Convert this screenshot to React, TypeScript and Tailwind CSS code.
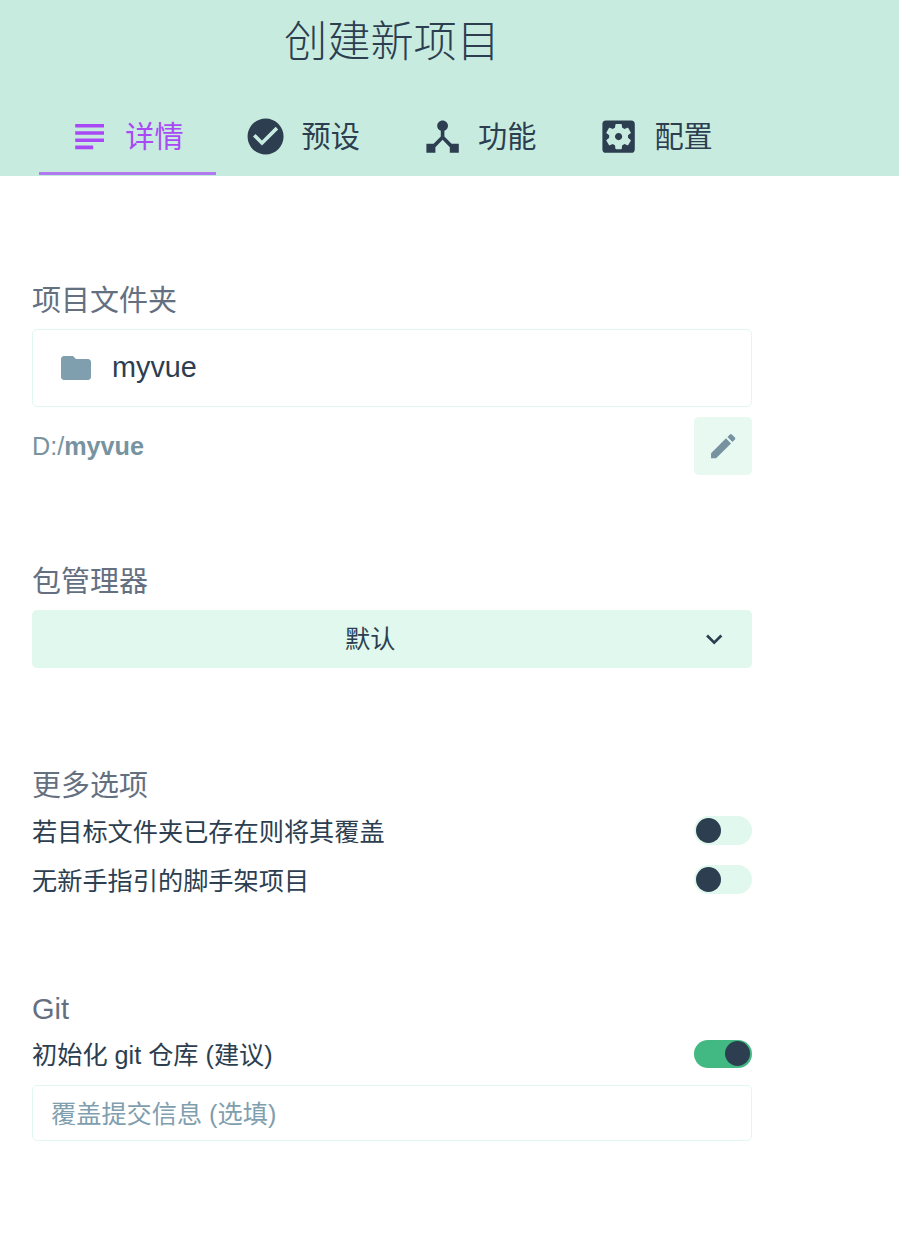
import React from "react";
import type { IconType } from "react-icons";
import {
  MdCheckCircle,
  MdDeviceHub,
  MdEdit,
  MdFolder,
  MdKeyboardArrowDown,
  MdSettingsApplications,
  MdSubject,
} from "react-icons/md";

const tabs: { label: string; icon: IconType }[] = [
  { label: "详情", icon: MdSubject },
  { label: "预设", icon: MdCheckCircle },
  { label: "功能", icon: MdDeviceHub },
  { label: "配置", icon: MdSettingsApplications },
];

const Heading = ({ children }: { children: React.ReactNode }) => (
  <h2 className="h-[42px] text-[29px] leading-[44px] text-[#646f7f]">
    {children}
  </h2>
);

const Switch = ({ label, on = false }: { label: string; on?: boolean }) => (
  <div className="flex h-[49px] items-center justify-between">
    <span>{label}</span>
    <button
      role="switch"
      aria-checked={on}
      aria-label={label}
      className={
        on
          ? "-mt-1 flex h-7 w-[58px] items-center justify-end rounded-full bg-[#42b983] pr-0.5"
          : "-mt-1 flex h-[29px] w-[58px] items-center rounded-full bg-[#e0f8ed] pl-0.5"
      }
    >
      <span className="size-[25px] rounded-full bg-[#2c3e50]" />
    </button>
  </div>
);

const App = () => {
  return (
    <main className="h-[1240px] bg-white font-['Liberation_Sans','Noto_Sans_CJK_SC',sans-serif] text-[25.2px] text-[#2c3e50]">
      <header className="h-44 bg-[#c8ebdf]">
        <div className="flex w-[784px] flex-col items-center">
          <h1 className="h-[84px] text-[43.2px] leading-[85px] font-light">
            创建新项目
          </h1>
          <nav className="flex h-[92px]">
            {tabs.map(({ label, icon: Icon }, i) => (
              <button
                key={label}
                className={
                  i === 0
                    ? "flex w-[176.4px] flex-col text-[#a849f5]"
                    : "flex w-[176.4px] flex-col"
                }
              >
                <span className="flex h-[88px] items-center pt-[18px] pl-[28.8px]">
                  <Icon className="size-[43.2px]" />
                  <span className="ml-[14px] text-[29.2px] leading-[42px]">
                    {label}
                  </span>
                </span>
                {i === 0 && <span className="h-[3px] w-full bg-[#b07bee]" />}
              </button>
            ))}
          </nav>
        </div>
      </header>

      <div className="w-[752px] pl-8">
        <section className="pt-[103px]">
          <Heading>项目文件夹</Heading>
          <div className="mt-2 flex h-[78px] items-center rounded-[5px] border border-[#e0f8ed] pl-[25px]">
            <MdFolder className="size-9 text-[#7f9eae]" />
            <span className="ml-[18px] text-[28.8px]">myvue</span>
          </div>
          <div className="mt-2.5 flex h-[58px] items-center justify-between text-[#7893a0]">
            <span className="pt-0.5">
              D:/<b>myvue</b>
            </span>
            <button
              aria-label="编辑"
              className="flex size-[58px] items-center justify-center rounded-[5px] bg-[#e8f9f1]"
            >
              <MdEdit className="size-[32.4px]" />
            </button>
          </div>
        </section>

        <section className="pt-[85px]">
          <Heading>包管理器</Heading>
          <button className="mt-2 flex h-[58px] w-full items-center rounded-[5px] bg-[#e0f8ed] pr-[22px]">
            <span className="flex-1 pt-0.5 pl-[11px] text-center">默认</span>
            <MdKeyboardArrowDown className="size-[32.4px]" />
          </button>
        </section>

        <section className="pt-24">
          <Heading>更多选项</Heading>
          <div className="pt-0.5">
            <Switch label="若目标文件夹已存在则将其覆盖" />
            <Switch label="无新手指引的脚手架项目" />
          </div>
        </section>

        <section className="pt-[81px]">
          <Heading>Git</Heading>
          <div className="pt-0.5">
            <Switch label="初始化 git 仓库 (建议)" on />
          </div>
          <input
            placeholder="覆盖提交信息 (选填)"
            className="mt-[5px] block h-14 w-full rounded-[5px] border border-[#e0f8ed] px-[18px] pt-0.5 placeholder:text-[#7f9eae]"
          />
        </section>
      </div>
    </main>
  );
};

export default App;
